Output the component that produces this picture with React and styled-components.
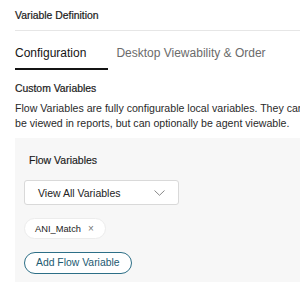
import styled, { createGlobalStyle } from 'styled-components';

const GlobalStyle = createGlobalStyle`
  html, body {
    margin: 0;
    padding: 0;
    background: #ffffff;
    overflow: hidden;
  }
  body {
    font-family: "Liberation Sans", Arial, Helvetica, sans-serif;
    color: #1c1c1c;
  }
`;

const Page = styled.div`
  width: 360px;
  padding: 9.5px 0 0 15px;
`;

const Title = styled.h1`
  margin: 0;
  font-size: 10.4px;
  line-height: 12px;
  font-weight: 400;
  color: #1a1a1a;
  -webkit-text-stroke: 0.2px #1a1a1a;
`;

const Divider = styled.hr`
  margin: 8px 0 0;
  border: 0;
  height: 1px;
  background: #e6e6e6;
`;

const TabList = styled.div`
  display: flex;
  gap: 8px;
  margin-top: 15px;
`;

const Tab = styled.button`
  padding: 0 ${(p) => (p.$active ? '22px' : '0')} 8px 0;
  border: 0;
  border-bottom: 2px solid ${(p) => (p.$active ? '#141414' : 'transparent')};
  background: none;
  font-family: inherit;
  font-size: 12px;
  line-height: 14px;
  color: ${(p) => (p.$active ? '#141414' : '#6b6b6b')};
  cursor: pointer;
`;

const SectionTitle = styled.h2`
  margin: 13.5px 0 0;
  font-size: 10.4px;
  line-height: 12px;
  font-weight: 400;
  color: #1a1a1a;
  -webkit-text-stroke: 0.2px #1a1a1a;
`;

const Description = styled.p`
  margin: 6px 0 0;
  font-size: 10.6px;
  line-height: 15px;
  color: #2a2a2a;
  white-space: nowrap;
`;

const Panel = styled.section`
  margin-top: 7px;
  padding: 15.5px 9px 8.5px;
  background: #f7f7f7;
  display: flex;
  flex-direction: column;
  align-items: flex-start;
`;

const FieldLabel = styled.label`
  margin-left: 5px;
  font-size: 10.5px;
  line-height: 12px;
  color: #1a1a1a;
  -webkit-text-stroke: 0.15px #1a1a1a;
`;

const Select = styled.button`
  margin-top: 14.5px;
  width: 155px;
  height: 25px;
  padding: 0 13px;
  display: flex;
  align-items: center;
  justify-content: space-between;
  background: #ffffff;
  border: 1px solid #d9d9d9;
  border-radius: 3px;
  font-family: inherit;
  font-size: 10.5px;
  color: #222222;
  cursor: pointer;
`;

const Chip = styled.span`
  margin-top: 13px;
  height: 21px;
  padding: 0 11.5px 0 10px;
  display: inline-flex;
  align-items: center;
  gap: 7px;
  box-sizing: border-box;
  background: #ffffff;
  border: 1px solid #ececec;
  border-radius: 11px;
  font-size: 9.3px;
  color: #222222;
`;

const ChipClose = styled.span`
  font-size: 10px;
  line-height: 1;
  color: #777777;
`;

const OutlineButton = styled.button`
  margin-top: 12.5px;
  height: 22px;
  padding: 0 11px;
  box-sizing: border-box;
  background: #ffffff;
  border: 1px solid #2d6f87;
  border-radius: 11px;
  font-family: inherit;
  font-size: 10.4px;
  color: #1c5a71;
  cursor: pointer;
`;

const Chevron = () => (
  <svg width="11" height="6" viewBox="0 0 11 6" fill="none">
    <path d="M0.5 0.5 L5.5 5.3 L10.5 0.5" stroke="#7a7a7a" strokeWidth="0.9" />
  </svg>
);

const App = () => {
  return (
    <>
      <GlobalStyle />
      <Page>
        <Title>Variable Definition</Title>
        <Divider />
        <TabList>
          <Tab $active>Configuration</Tab>
          <Tab>Desktop Viewability &amp; Order</Tab>
        </TabList>
        <SectionTitle>Custom Variables</SectionTitle>
        <Description>
          Flow Variables are fully configurable local variables. They cannot
          <br />
          be viewed in reports, but can optionally be agent viewable.
        </Description>
        <Panel>
          <FieldLabel>Flow Variables</FieldLabel>
          <Select>
            <span>View All Variables</span>
            <Chevron />
          </Select>
          <Chip>
            ANI_Match
            <ChipClose>×</ChipClose>
          </Chip>
          <OutlineButton>Add Flow Variable</OutlineButton>
        </Panel>
      </Page>
    </>
  );
};

export default App;
